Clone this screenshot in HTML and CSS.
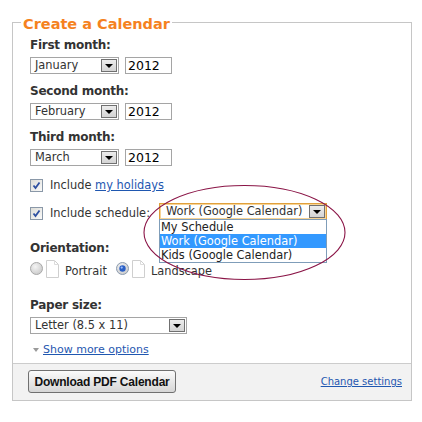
FILE: index.html
```html
<!DOCTYPE html>
<html lang="en">
<head>
  <meta charset="UTF-8" />
  <title>Create a Calendar</title>
  <link rel="stylesheet" href="styles.css">
</head>
<body>
  <div class="page">
    <fieldset class="panel">
      <legend>Create a Calendar</legend>
      <div class="panel-body">
        <div class="field">
          <div class="label">First month:</div>
          <div class="date-row">
            <span class="select month"><span class="select-text">January</span><span class="drop"></span></span>
            <span class="year">2012</span>
          </div>
        </div>
        <div class="field">
          <div class="label">Second month:</div>
          <div class="date-row">
            <span class="select month"><span class="select-text">February</span><span class="drop"></span></span>
            <span class="year">2012</span>
          </div>
        </div>
        <div class="field">
          <div class="label">Third month:</div>
          <div class="date-row">
            <span class="select month"><span class="select-text">March</span><span class="drop"></span></span>
            <span class="year">2012</span>
          </div>
        </div>

        <div class="check-row holidays">
          <svg class="checkbox" width="13" height="13" viewBox="0 0 13 13">
            <defs>
              <linearGradient id="cbg" x1="0" y1="0" x2="1" y2="1">
                <stop offset="0" stop-color="#dcdcd6" />
                <stop offset="1" stop-color="#fbfbfb" />
              </linearGradient>
            </defs>
            <rect x="0.5" y="0.5" width="12" height="12" fill="url(#cbg)" stroke="#8a98a8" />
            <path d="M3.5 6.5 L5.5 9 L9.5 3.5" fill="none" stroke="#2d4fa0" stroke-width="1.8" />
          </svg>
          <span class="check-text">Include <a href="#">my holidays</a></span>
        </div>
        <div class="check-row schedule">
          <svg class="checkbox" width="13" height="13" viewBox="0 0 13 13">
            <rect x="0.5" y="0.5" width="12" height="12" fill="url(#cbg)" stroke="#8a98a8" />
            <path d="M3.5 6.5 L5.5 9 L9.5 3.5" fill="none" stroke="#2d4fa0" stroke-width="1.8" />
          </svg>
          <span class="check-text">Include schedule:</span>
          <span class="select schedule-select">
            <span class="select-text">Work (Google Calendar)</span><span class="drop"></span>
            <ul class="options">
              <li>My Schedule</li>
              <li class="picked">Work (Google Calendar)</li>
              <li>Kids (Google Calendar)</li>
            </ul>
          </span>
        </div>

        <div class="field orientation">
          <div class="label">Orientation:</div>
          <div class="radio-row">
            <svg class="radio" width="13" height="13" viewBox="0 0 13 13">
              <defs>
                <radialGradient id="rbg" cx="0.4" cy="0.35" r="0.7">
                  <stop offset="0" stop-color="#f4f4f4" />
                  <stop offset="1" stop-color="#c9c9c9" />
                </radialGradient>
              </defs>
              <circle cx="6.5" cy="6.5" r="6" fill="url(#rbg)" stroke="#a8a8a8" />
            </svg>
            <svg class="sheet" width="13" height="18" viewBox="0 0 13 18">
              <path d="M0.5 0.5 H8.5 L12.5 4.5 V17.5 H0.5 Z" fill="#fff" stroke="#cfcfcf" />
              <path d="M8.5 0.5 V4.5 H12.5" fill="none" stroke="#dcdcdc" />
            </svg>
            <span class="radio-text">Portrait</span>
            <svg class="radio" width="13" height="13" viewBox="0 0 13 13">
              <circle cx="6.5" cy="6.5" r="6" fill="url(#rbg)" stroke="#8c9cb0" />
              <circle cx="6.5" cy="6.5" r="3.2" fill="#2a5fc4" />
              <circle cx="5.7" cy="5.6" r="1.1" fill="#9cc0ff" />
            </svg>
            <svg class="sheet" width="13" height="18" viewBox="0 0 13 18">
              <path d="M0.5 0.5 H8.5 L12.5 4.5 V17.5 H0.5 Z" fill="#fff" stroke="#cfcfcf" />
              <path d="M8.5 0.5 V4.5 H12.5" fill="none" stroke="#dcdcdc" />
            </svg>
            <span class="radio-text">Landscape</span>
          </div>
        </div>

        <div class="field paper">
          <div class="label">Paper size:</div>
          <span class="select paper-select"><span class="select-text">Letter (8.5 x 11)</span><span class="drop"></span></span>
        </div>

        <div class="more">
          <span class="more-arrow"></span>
          <a href="#">Show more options</a>
        </div>
      </div>

      <div class="panel-foot">
        <button class="btn">Download PDF Calendar</button>
        <a href="#" class="settings">Change settings</a>
      </div>
    </fieldset>

    <svg class="ring" width="204" height="98" viewBox="0 0 204 98">
      <ellipse cx="101.5" cy="48.5" rx="100.5" ry="47" fill="none" stroke="#8a1446" stroke-width="1.1" />
    </svg>
  </div>
</body>
</html>
```

FILE: styles.css
```css
html, body {
  margin: 0;
  padding: 0;
  background: #fff;
}
body {
  font-family: "DejaVu Sans", Verdana, sans-serif;
  font-size: 11.4px;
  color: #333;
}

.page {
  position: relative;
  padding-top: 11px;
}

.panel {
  margin: 0 0 0 12px;
  padding: 0;
  width: 400px;
  box-sizing: border-box;
  border: 1px solid #c6c6c6;
  min-inline-size: 0;
}

.panel legend {
  margin-left: 8px;
  padding: 4px 2px 0;
  font-size: 14.5px;
  line-height: 18px;
  font-weight: bold;
  color: #f5821f;
}

.panel-body {
  padding: 4px 0 0 17px;
}

.field {
  margin-bottom: 9px;
}

.label {
  font-size: 12px;
  line-height: 16px;
  font-weight: bold;
  letter-spacing: -0.25px;
  color: #333;
  margin-bottom: 4px;
}

.date-row {
  display: flex;
  gap: 6px;
}

/* fake select boxes */
.select {
  position: relative;
  display: flex;
  align-items: center;
  height: 17px;
  box-sizing: border-box;
  border: 1px solid #a5a5a5;
  background: #fff;
}
.select-text {
  flex: 1;
  padding-left: 4px;
  line-height: 15px;
  color: #333;
  white-space: nowrap;
}
.drop {
  position: relative;
  width: 14px;
  height: 11px;
  margin: 1px;
  border: 1px solid #707070;
  background: linear-gradient(#ececec, #d4d4d4);
}
.drop::after {
  content: "";
  position: absolute;
  left: 3px;
  top: 4px;
  border-left: 4px solid transparent;
  border-right: 4px solid transparent;
  border-top: 4px solid #000;
}

.month {
  width: 89px;
}
.year {
  width: 47px;
  height: 17px;
  box-sizing: border-box;
  border: 1px solid #a5a5a5;
  padding-left: 2px;
  font-size: 12.5px;
  line-height: 15px;
  color: #000;
}

.check-row {
  display: flex;
  align-items: flex-end;
}
.check-row .checkbox {
  margin-right: 7px;
}
.check-text {
  line-height: 13px;
  white-space: nowrap;
}
.holidays {
  margin-top: 13px;
  margin-bottom: 11px;
}
.check-text a,
.more a,
.settings {
  color: #1f57b0;
}

.schedule-select {
  width: 168px;
  margin-left: 9px;
  border-color: #e0a03c;
  box-shadow: inset 0 0 0 1px #f7d394;
}
.schedule-select .select-text {
  padding-left: 6px;
}
.options {
  position: absolute;
  left: -1px;
  top: 100%;
  width: 168px;
  box-sizing: border-box;
  margin: 0;
  padding: 0;
  list-style: none;
  background: #fff;
  border: 1px solid #7f9db9;
  z-index: 5;
}
.options li {
  height: 14px;
  line-height: 14px;
  padding-left: 1px;
  color: #222;
  white-space: nowrap;
}
.options .picked {
  background: #3399ff;
  color: #fff;
}

.orientation {
  margin-top: 20px;
  margin-bottom: 19px;
}
.radio-row {
  display: flex;
  align-items: flex-end;
  height: 18px;
}
.radio {
  margin: 0 3px 3px 0;
}
.sheet {
  margin-right: 6px;
}
.radio-text {
  line-height: 13px;
  margin-right: 9px;
}

.paper {
  margin-bottom: 9px;
}
.paper-select {
  width: 157px;
}

.more {
  display: flex;
  align-items: center;
  font-size: 11px;
  line-height: 13px;
  margin-bottom: 7px;
}
.more-arrow {
  margin: 0 4px 0 3px;
  border-left: 3.5px solid transparent;
  border-right: 3.5px solid transparent;
  border-top: 4px solid #9a9a9a;
}

.panel-foot {
  display: flex;
  justify-content: space-between;
  align-items: center;
  border-top: 1px solid #cccccc;
  background: #f2f2f2;
  padding: 6px 9px 7px 15px;
}
.btn {
  height: 23px;
  width: 148px;
  padding: 0;
  font-family: "Liberation Sans", Arial, sans-serif;
  font-size: 12px;
  font-weight: bold;
  letter-spacing: -0.2px;
  color: #111;
  border: 1px solid #707070;
  border-radius: 3px;
  background: linear-gradient(#fbfbfb, #e4e4e4 60%, #d6d6d6);
}
.settings {
  font-size: 10px;
}

.ring {
  position: absolute;
  left: 143px;
  top: 184px;
  z-index: 10;
  pointer-events: none;
}
```
